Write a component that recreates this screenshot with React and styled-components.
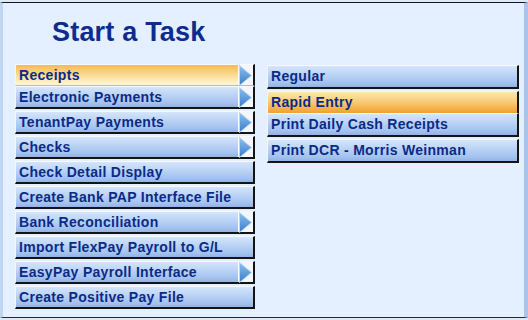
import React from 'react';
import styled, { createGlobalStyle, css } from 'styled-components';

const Global = createGlobalStyle`
  html, body { margin: 0; padding: 0; background: #e4efff; }
  body { font-family: "Liberation Sans", Arial, sans-serif; }
  #root { width: 528px; height: 320px; }
`;

const Window = styled.div`
  width: 528px;
  height: 320px;
  box-sizing: border-box;
  padding-top: 2px;
  padding-bottom: 2px;
  background: #dde8f8;
  display: flex;
  flex-direction: column;
`;

const Panel = styled.div`
  flex: 1;
  box-sizing: border-box;
  background: #e4efff;
  border-top: 1px solid #161616;
  border-left: 3px solid #c2d5f0;
  border-right: 4px solid #a9c3ea;
  border-bottom: 1px solid #2a2a2a;
  display: flex;
  flex-direction: column;
`;

const Title = styled.h1`
  margin: 13px 0 0 0;
  padding-left: 49px;
  font-size: 27px;
  line-height: 32px;
  letter-spacing: 0.2px;
  font-weight: bold;
  color: #0c2c8e;
`;

const Columns = styled.div`
  display: flex;
  align-items: flex-start;
  gap: 12px;
  margin-top: 16px;
  padding-left: 12px;
`;

const Column = styled.div`
  width: ${p => p.$width}px;
  margin-top: ${p => (p.$tall ? 1 : 0)}px;
  display: flex;
  flex-direction: column;
`;

const variants = {
  normal: css`
    height: ${p => (p.$tall ? 24 : 23)}px;
    margin-bottom: 2px;
    background: linear-gradient(#d4e5fb 0%, #bcd4f5 40%, #a3c2ee 80%, #92b3e6 100%);
    border-bottom: 2px solid #141414;
  `,
  open: css`
    height: 22px;
    background: linear-gradient(#f5bb58 0%, #f9d488 40%, #fde9b8 75%, #fff5d6 100%);
    border-bottom: 1px solid #b9b9b9;
  `,
  hot: css`
    height: 22px;
    background: linear-gradient(#fde7b0 0%, #f9cd78 45%, #f4b048 80%, #f0a030 100%);
    border-bottom: 0;
  `,
};

const Item = styled.div`
  box-sizing: border-box;
  display: flex;
  align-items: stretch;
  border-top: 1px solid #f6f9ff;
  border-left: 1px solid #f0f5fd;
  border-right: 2px solid #141414;
  ${p => variants[p.$variant]}
`;

const Label = styled.span`
  flex: 1;
  padding-left: 3px;
  font-size: 14px;
  font-weight: bold;
  letter-spacing: 0.3px;
  line-height: 20px;
  color: #0b2a88;
  white-space: nowrap;
`;

const ArrowCell = styled.span`
  width: 14px;
  display: flex;
  align-items: center;
  justify-content: flex-start;
  background: #f3f7fd;
  border-left: 1px solid #ffffff;
`;

const Arrow = () => (
  <svg width="13" height="21" viewBox="0 0 13 21">
    <defs>
      <linearGradient id="arrowFill" x1="0" y1="0" x2="0" y2="1">
        <stop offset="0" stopColor="#8cc0ef" />
        <stop offset="1" stopColor="#3a7bc9" />
      </linearGradient>
    </defs>
    <polygon points="0.5,0.5 12.5,10.5 0.5,20.5" fill="url(#arrowFill)" stroke="#b9d6f3" strokeWidth="1" />
  </svg>
);

const MenuItem = ({ label, variant = 'normal', arrow, tall }) => (
  <Item $variant={variant} $tall={tall}>
    <Label>{label}</Label>
    {arrow && (
      <ArrowCell>
        <Arrow />
      </ArrowCell>
    )}
  </Item>
);

const leftItems = [
  { label: 'Receipts', variant: 'open', arrow: true },
  { label: 'Electronic Payments', arrow: true },
  { label: 'TenantPay Payments', arrow: true },
  { label: 'Checks', arrow: true },
  { label: 'Check Detail Display' },
  { label: 'Create Bank PAP Interface File' },
  { label: 'Bank Reconciliation', arrow: true },
  { label: 'Import FlexPay Payroll to G/L' },
  { label: 'EasyPay Payroll Interface', arrow: true },
  { label: 'Create Positive Pay File' },
];

const rightItems = [
  { label: 'Regular' },
  { label: 'Rapid Entry', variant: 'hot' },
  { label: 'Print Daily Cash Receipts' },
  { label: 'Print DCR - Morris Weinman' },
];

export default function App() {
  return (
    <>
      <Global />
      <Window>
        <Panel>
          <Title>Start a Task</Title>
          <Columns>
            <Column $width={240}>
              {leftItems.map(i => (
                <MenuItem key={i.label} {...i} />
              ))}
            </Column>
            <Column $width={252} $tall>
              {rightItems.map(i => (
                <MenuItem key={i.label} {...i} tall />
              ))}
            </Column>
          </Columns>
        </Panel>
      </Window>
    </>
  );
}
